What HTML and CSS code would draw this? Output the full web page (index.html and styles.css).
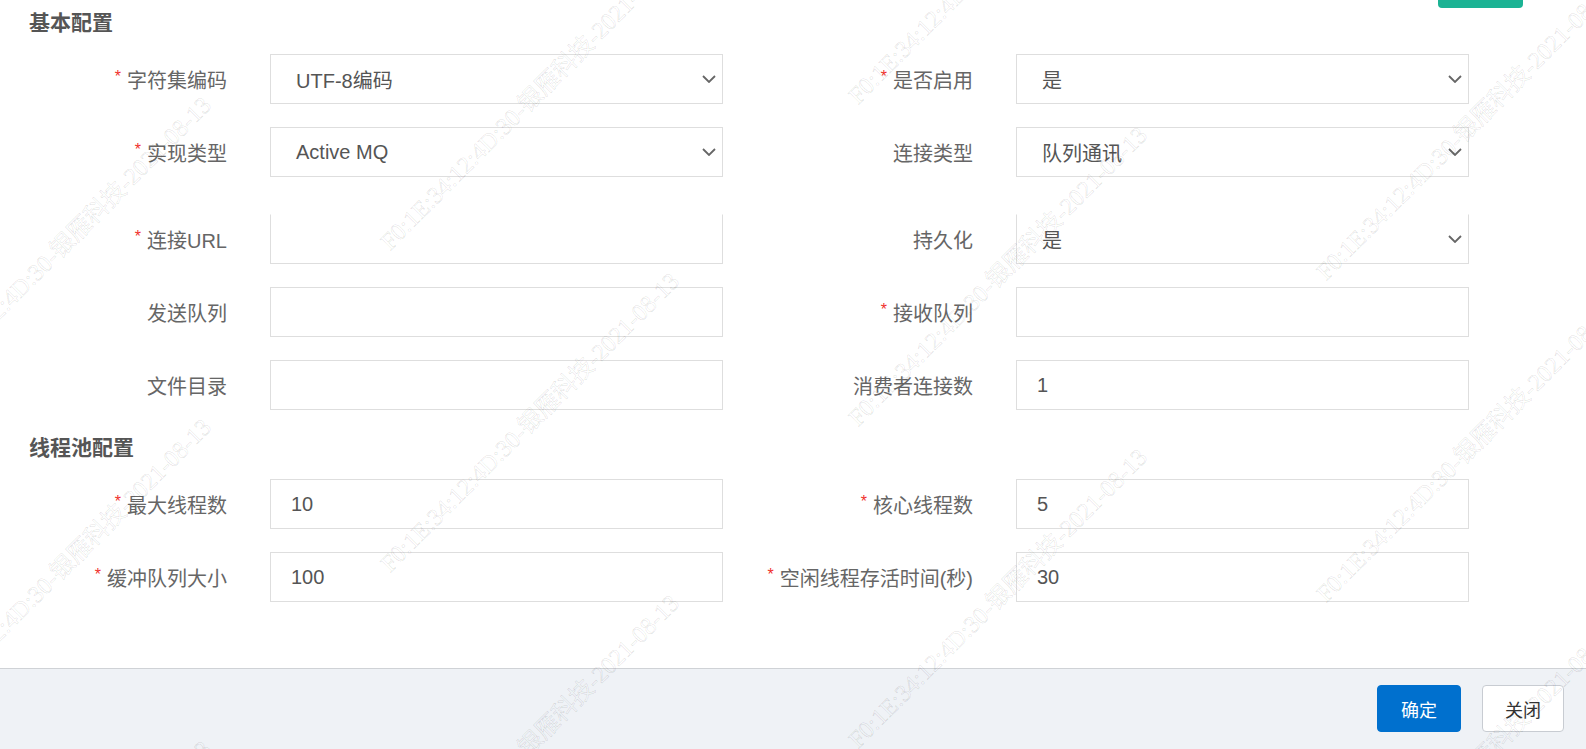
FILE: index.html
```html
<!DOCTYPE html>
<html lang="zh-CN">

<head>
    <meta charset="UTF-8">
    <meta name="viewport" content="width=device-width, initial-scale=1.0">
    <title>消息队列配置</title>
    <link rel="stylesheet" href="styles.css">
</head>

<body>
    <div class="dialog">
        <div class="dialog-body">
            <div class="section-head">
                <h3 class="section-title">基本配置</h3>
                <button class="btn-add" type="button"></button>
            </div>

            <div class="form-row">
                <div class="field">
                    <label class="field-label"><span class="req">*</span>字符集编码</label>
                    <div class="control select"><span>UTF-8编码</span>
                        <svg class="chevron" width="14" height="8" viewBox="0 0 14 8"><path d="M1 1l6 6 6-6" fill="none" stroke="#666" stroke-width="1.8"/></svg>
                    </div>
                </div>
                <div class="field">
                    <label class="field-label"><span class="req">*</span>是否启用</label>
                    <div class="control select"><span>是</span>
                        <svg class="chevron" width="14" height="8" viewBox="0 0 14 8"><path d="M1 1l6 6 6-6" fill="none" stroke="#666" stroke-width="1.8"/></svg>
                    </div>
                </div>
            </div>

            <div class="form-row">
                <div class="field">
                    <label class="field-label"><span class="req">*</span>实现类型</label>
                    <div class="control select"><span>Active MQ</span>
                        <svg class="chevron" width="14" height="8" viewBox="0 0 14 8"><path d="M1 1l6 6 6-6" fill="none" stroke="#666" stroke-width="1.8"/></svg>
                    </div>
                </div>
                <div class="field">
                    <label class="field-label">连接类型</label>
                    <div class="control select"><span>队列通讯</span>
                        <svg class="chevron" width="14" height="8" viewBox="0 0 14 8"><path d="M1 1l6 6 6-6" fill="none" stroke="#666" stroke-width="1.8"/></svg>
                    </div>
                </div>
            </div>

            <div class="form-row gap-lg">
                <div class="field">
                    <label class="field-label"><span class="req">*</span>连接URL</label>
                    <input class="control no-top" type="text">
                </div>
                <div class="field">
                    <label class="field-label">持久化</label>
                    <div class="control select no-top"><span>是</span>
                        <svg class="chevron" width="14" height="8" viewBox="0 0 14 8"><path d="M1 1l6 6 6-6" fill="none" stroke="#666" stroke-width="1.8"/></svg>
                    </div>
                </div>
            </div>

            <div class="form-row">
                <div class="field">
                    <label class="field-label">发送队列</label>
                    <input class="control" type="text">
                </div>
                <div class="field">
                    <label class="field-label"><span class="req">*</span>接收队列</label>
                    <input class="control" type="text">
                </div>
            </div>

            <div class="form-row">
                <div class="field">
                    <label class="field-label">文件目录</label>
                    <input class="control" type="text">
                </div>
                <div class="field">
                    <label class="field-label">消费者连接数</label>
                    <input class="control" type="text" value="1">
                </div>
            </div>

            <div class="section-head">
                <h3 class="section-title">线程池配置</h3>
            </div>

            <div class="form-row">
                <div class="field">
                    <label class="field-label"><span class="req">*</span>最大线程数</label>
                    <input class="control" type="text" value="10">
                </div>
                <div class="field">
                    <label class="field-label"><span class="req">*</span>核心线程数</label>
                    <input class="control" type="text" value="5">
                </div>
            </div>

            <div class="form-row">
                <div class="field">
                    <label class="field-label"><span class="req">*</span>缓冲队列大小</label>
                    <input class="control" type="text" value="100">
                </div>
                <div class="field">
                    <label class="field-label"><span class="req">*</span>空闲线程存活时间(秒)</label>
                    <input class="control" type="text" value="30">
                </div>
            </div>
        </div>

        <div class="dialog-footer">
            <button class="btn btn-primary" type="button">确定</button>
            <button class="btn btn-close" type="button">关闭</button>
        </div>

        <!-- watermark -->
        <div class="watermark" id="watermark"></div>
    </div>

    <script>
        // tile the watermark text along the diagonals
        const mark = "F0:1E:34:12:4D:30-银雁科技-2021-08-13";
        const layer = document.getElementById("watermark");
        const columns = [-75, 393, 861, 1329];

        columns.forEach(x => {
            for (let k = 0; k < 8; k++) {
                const y = 325 + 322 * k - x;
                if (y < -40 || y > 1100) continue;
                const span = document.createElement("span");
                span.className = "wm";
                span.textContent = mark;
                span.style.left = x + "px";
                span.style.top = (y - 24) + "px";
                layer.appendChild(span);
            }
        });
    </script>
</body>
</html>
```

FILE: styles.css
```css
body {
    margin: 0;
    background-color: #fff;
    font-family: "Liberation Sans", "Noto Sans CJK SC", sans-serif;
}

.dialog {
    position: relative;
    height: 749px;
    display: flex;
    flex-direction: column;
    overflow: hidden;
}

.dialog-body {
    flex: 1;
}

/* Section headings */
.section-head {
    display: flex;
    justify-content: space-between;
    align-items: flex-start;
    padding: 9px 63px 0 29px;
    margin-top: 15px;
}

.section-head:first-child {
    margin-top: 0;
}

.section-title {
    margin: 0;
    font-size: 21px;
    line-height: 28px;
    font-weight: bold;
    color: #555;
}

.btn-add {
    width: 85px;
    height: 40px;
    margin-top: -41px;
    border: none;
    border-radius: 4px;
    background-color: #1bb394;
}

/* Form rows */
.form-row {
    display: grid;
    grid-template-columns: 723px 723px;
    column-gap: 23px;
    margin-top: 23px;
}

.section-head + .form-row {
    margin-top: 17px;
}

.form-row.gap-lg {
    margin-top: 37px;
}

.field {
    display: flex;
    align-items: center;
}

.field-label {
    width: 270px;
    flex-shrink: 0;
    box-sizing: border-box;
    padding-right: 43px;
    display: flex;
    justify-content: flex-end;
    align-items: center;
    font-size: 20px;
    color: #666;
}

.req {
    color: #f0302c;
    font-size: 16px;
    margin-right: 6px;
    margin-top: -4px;
}

.control {
    width: 453px;
    height: 50px;
    box-sizing: border-box;
    margin: 0;
    border: 1px solid #dedede;
    background-color: #fff;
    font-family: inherit;
    font-size: 20px;
    color: #555;
    padding: 0 10px 0 20px;
    outline: none;
}

.control.no-top {
    border-top-color: transparent;
}

.select {
    display: flex;
    align-items: center;
    justify-content: space-between;
    padding: 0 6px 0 25px;
}

.chevron {
    display: block;
}

/* Footer */
.dialog-footer {
    height: 81px;
    box-sizing: border-box;
    border-top: 1px solid #cfd2d6;
    background-color: #eff2f6;
    display: flex;
    justify-content: flex-end;
    align-items: flex-start;
    gap: 21px;
    padding: 16px 22px 0 0;
}

.btn {
    width: 84px;
    height: 47px;
    border: 1px solid #c8ccd2;
    border-radius: 4px;
    background-color: #fff;
    font-family: "Noto Sans CJK SC", sans-serif;
    font-size: 18px;
    color: #333;
    cursor: pointer;
}

.btn-primary {
    background-color: #0070ce;
    border-color: #0070ce;
    color: #fff;
}

.btn-close {
    width: 82px;
}

/* Watermark overlay */
.watermark {
    position: absolute;
    left: 0;
    top: 0;
    right: 0;
    bottom: 0;
    pointer-events: none;
}

.wm {
    position: absolute;
    white-space: nowrap;
    font-family: "Liberation Serif", "Noto Sans CJK SC", serif;
    font-size: 24px;
    line-height: 24px;
    color: rgba(0, 0, 0, 0.02);
    -webkit-text-stroke: 0.5px rgba(0, 0, 0, 0.15);
    transform-origin: 0 100%;
    transform: rotate(-45deg);
}
```
